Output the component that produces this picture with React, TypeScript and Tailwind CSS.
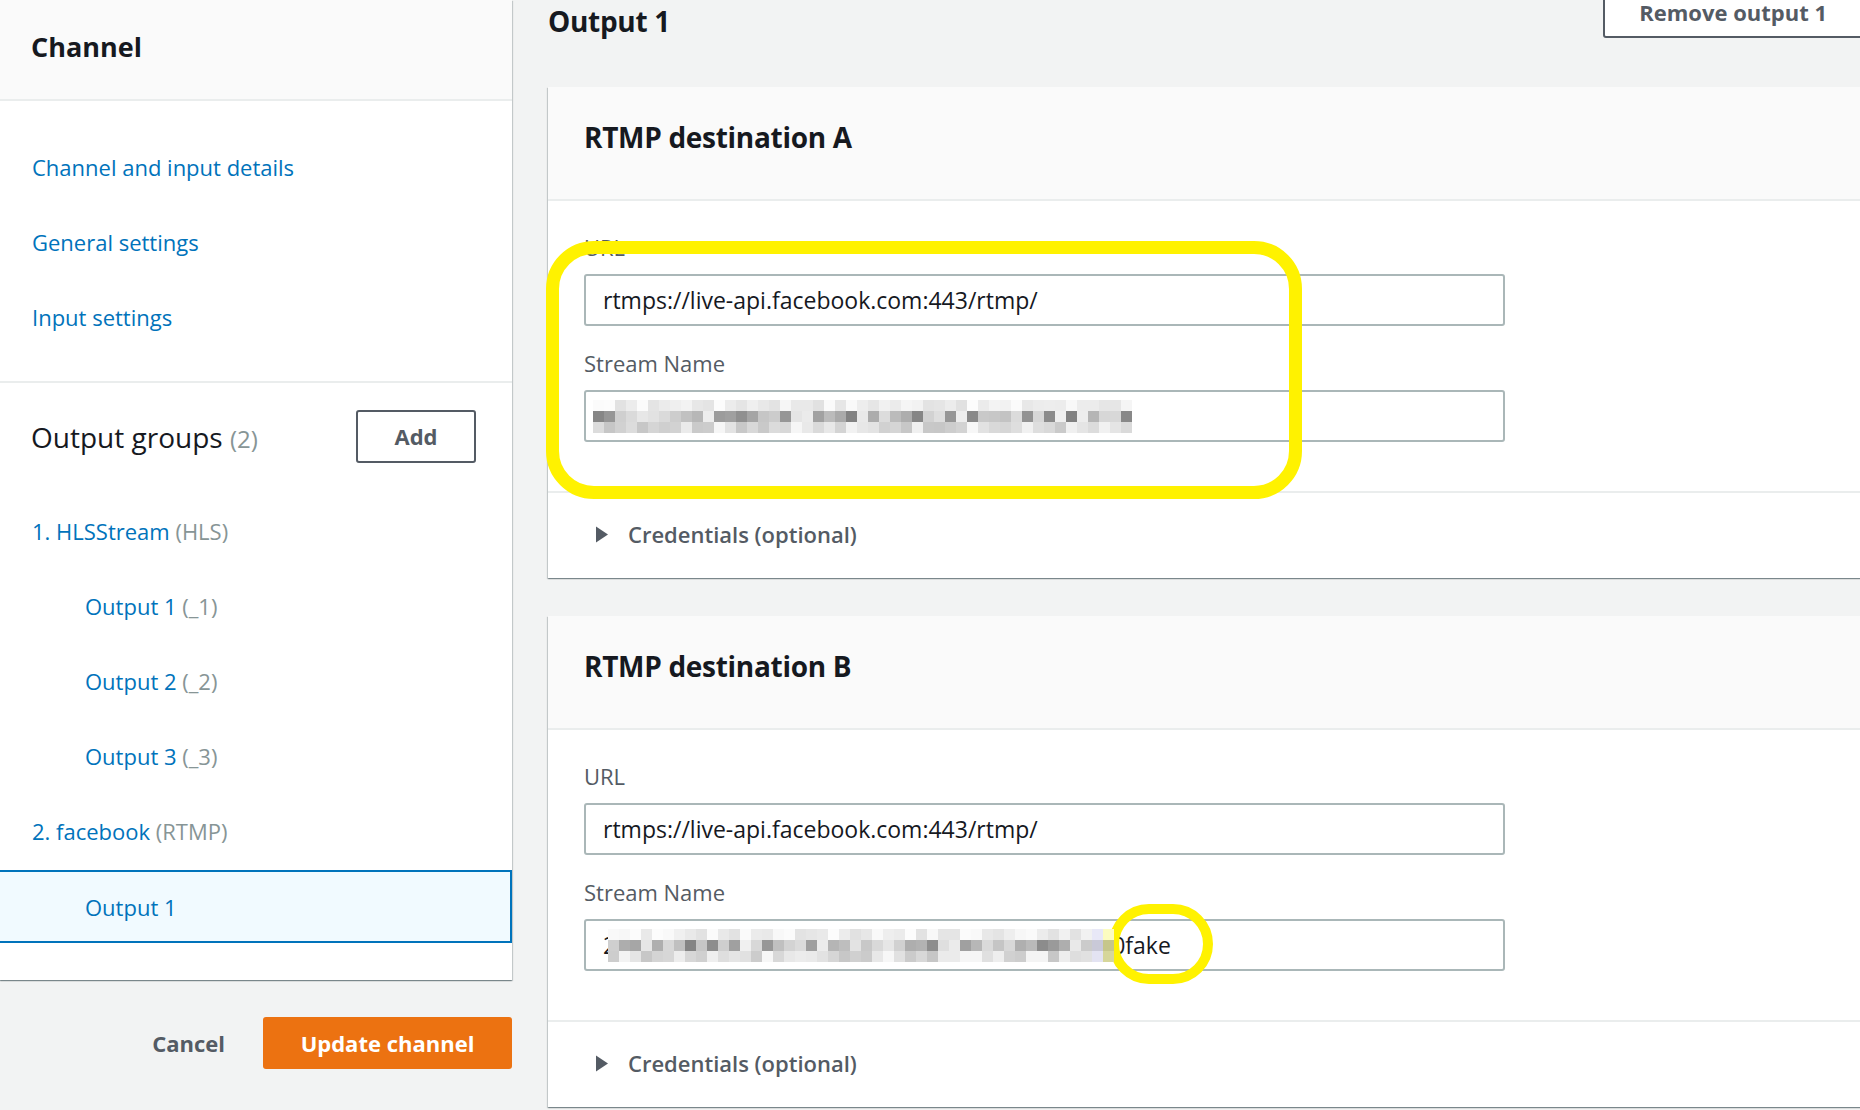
import React from 'react'

const cardShadow =
  'shadow-[0_1px_1px_0_rgba(0,28,36,0.3),1px_1px_1px_0_rgba(0,28,36,0.15),-1px_1px_1px_0_rgba(0,28,36,0.15)]'

// pixelated (blurred) stream key
function Mosaic({ cols, seed, tint }: { cols: number; seed: number; tint?: boolean }) {
  let s = seed
  const next = () => {
    s = (s * 9301 + 49297) % 233280
    return s / 233280
  }
  const rows = [
    { base: 224, span: 30 },
    { base: 125, span: 115 },
    { base: 198, span: 50 },
  ]
  return (
    <div className="flex flex-col">
      {rows.map((row, ri) => (
        <div key={ri} className="flex">
          {Array.from({ length: cols }).map((_, ci) => {
            const v = Math.min(252, Math.round(row.base + next() * row.span))
            let bg = `rgb(${v},${v},${v})`
            if (tint && ci >= cols - 2) bg = ci === cols - 1 ? `rgb(${v},${v},${Math.max(120, v - 60)})` : `rgb(${v - 10},${v - 10},${v + 5})`
            return <div key={ci} className="w-[11px] h-[11px]" style={{ backgroundColor: bg }} />
          })}
        </div>
      ))}
    </div>
  )
}

function Triangle() {
  return (
    <svg width="14" height="17" viewBox="0 0 14 17" className="shrink-0">
      <path d="M1 0.5 L13 8.5 L1 16.5 Z" fill="#545b64" />
    </svg>
  )
}

function Field({ label, children }: { label: string; children: React.ReactNode }) {
  return (
    <div className="flex flex-col">
      <div className="text-[22px] leading-[30px] text-[#545b64] mb-[12px]">{label}</div>
      <div className="w-[921px] h-[52px] border-2 border-[#aab7b8] rounded-[3px] bg-white flex items-center text-[23px] text-[#16191f] overflow-hidden">
        {children}
      </div>
    </div>
  )
}

function Destination({ letter, stream }: { letter: string; stream: React.ReactNode }) {
  return (
    <div className={`w-[1340px] bg-white ${cardShadow}`}>
      <div className="h-[114px] bg-[#fafafa] border-b-2 border-[#eaeded] pl-[36px] pt-[32px]">
        <h2 className="text-[28px] leading-[36px] font-bold text-[#16191f] tracking-[-0.3px]">
          RTMP destination {letter}
        </h2>
      </div>
      <div className="px-[36px] pt-[31px] pb-[49px] flex flex-col gap-[22px]">
        <Field label="URL">
          <span className="pl-[17px]">rtmps://live-api.facebook.com:443/rtmp/</span>
        </Field>
        <Field label="Stream Name">{stream}</Field>
      </div>
      <div className="h-[87px] border-t-2 border-[#eaeded] pl-[47px] pb-[3px] flex items-center gap-[19px]">
        <Triangle />
        <span className="text-[22px] font-semibold text-[#545b64]">Credentials (optional)</span>
      </div>
    </div>
  )
}

function NavLink({ children, indent }: { children: React.ReactNode; indent?: boolean }) {
  return (
    <div className={`text-[22px] leading-[30px] font-medium text-[#0073bb] ${indent ? 'pl-[85px]' : 'pl-[32px]'}`}>
      {children}
    </div>
  )
}

export default function App() {
  return (
    <div className="relative flex w-full h-[1110px] overflow-hidden bg-[#f2f3f3] font-['Open_Sans',sans-serif]">
      {/* left navigation */}
      <div className="w-[512px] shrink-0 flex flex-col">
        <div className={`h-[980px] bg-white ${cardShadow} flex flex-col`}>
          <div className="h-[101px] bg-[#fafafa] border-b-2 border-[#eaeded] pl-[31px] pt-[28px]">
            <h1 className="text-[27px] leading-[38px] font-bold text-[#16191f]">Channel</h1>
          </div>
          <div className="pt-[51px] pb-[49px] flex flex-col gap-[45px] border-b-2 border-[#eaeded]">
            <NavLink>Channel and input details</NavLink>
            <NavLink>General settings</NavLink>
            <NavLink>Input settings</NavLink>
          </div>
          <div className="pt-[27px] pl-[31px] pr-[36px] flex items-center justify-between">
            <div className="text-[28px] leading-[40px] text-[#16191f] pt-[2px]">
              Output groups <span className="text-[24px] text-[#879596]">(2)</span>
            </div>
            <button className="w-[120px] h-[53px] border-2 border-[#545b64] rounded-[3px] text-[22px] font-bold text-[#545b64]">
              Add
            </button>
          </div>
          <div className="pt-[53px] flex flex-col gap-[45px]">
            <NavLink>
              1. HLSStream <span className="text-[#879596]">(HLS)</span>
            </NavLink>
            <NavLink indent>
              Output 1 <span className="text-[#879596]">(_1)</span>
            </NavLink>
            <NavLink indent>
              Output 2 <span className="text-[#879596]">(_2)</span>
            </NavLink>
            <NavLink indent>
              Output 3 <span className="text-[#879596]">(_3)</span>
            </NavLink>
            <NavLink>
              2. facebook <span className="text-[#879596]">(RTMP)</span>
            </NavLink>
          </div>
          <div className="mt-[24px] h-[73px] bg-[#f1faff] border-y-2 border-r-2 border-[#0073bb] flex items-center pl-[85px] pt-[2px] text-[22px] font-medium text-[#0073bb]">
            Output 1
          </div>
        </div>
        <div className="flex items-center justify-end gap-[38px] pt-[37px]">
          <span className="text-[22px] font-bold text-[#545b64]">Cancel</span>
          <button className="w-[249px] h-[52px] bg-[#ec7211] rounded-[3px] text-[22px] font-bold text-white">
            Update channel
          </button>
        </div>
      </div>

      {/* output detail */}
      <div className="flex-1 pl-[36px] flex flex-col overflow-hidden">
        <div className="h-[87px] shrink-0 flex justify-between items-start">
          <h1 className="mt-[3px] text-[28px] leading-[36px] font-bold text-[#16191f] tracking-[-0.3px]">Output 1</h1>
          <button className="-mt-[14px] -mr-[3px] h-[52px] px-[34px] border-2 border-[#545b64] rounded-[3px] bg-white text-[22px] font-bold text-[#545b64]">
            Remove output 1
          </button>
        </div>
        <div className="flex flex-col gap-[38px]">
          <Destination
            letter="A"
            stream={
              <div className="pl-[7px]">
                <Mosaic cols={49} seed={17} />
              </div>
            }
          />
          <Destination
            letter="B"
            stream={
              <div className="pl-[17px] flex items-center">
                <span>2</span>
                <div className="-ml-[8px] relative z-10">
                  <Mosaic cols={46} seed={91} tint />
                </div>
                <span className="-ml-[2px]">0fake</span>
              </div>
            }
          />
        </div>
      </div>

      {/* yellow annotations */}
      <div className="absolute left-[546px] top-[241px] w-[756px] h-[258px] border-[13px] border-[#fff200] rounded-[48px] pointer-events-none" />
      <div className="absolute left-[1109px] top-[904px] w-[104px] h-[80px] border-[10px] border-[#fff200] rounded-full pointer-events-none" />
    </div>
  )
}
